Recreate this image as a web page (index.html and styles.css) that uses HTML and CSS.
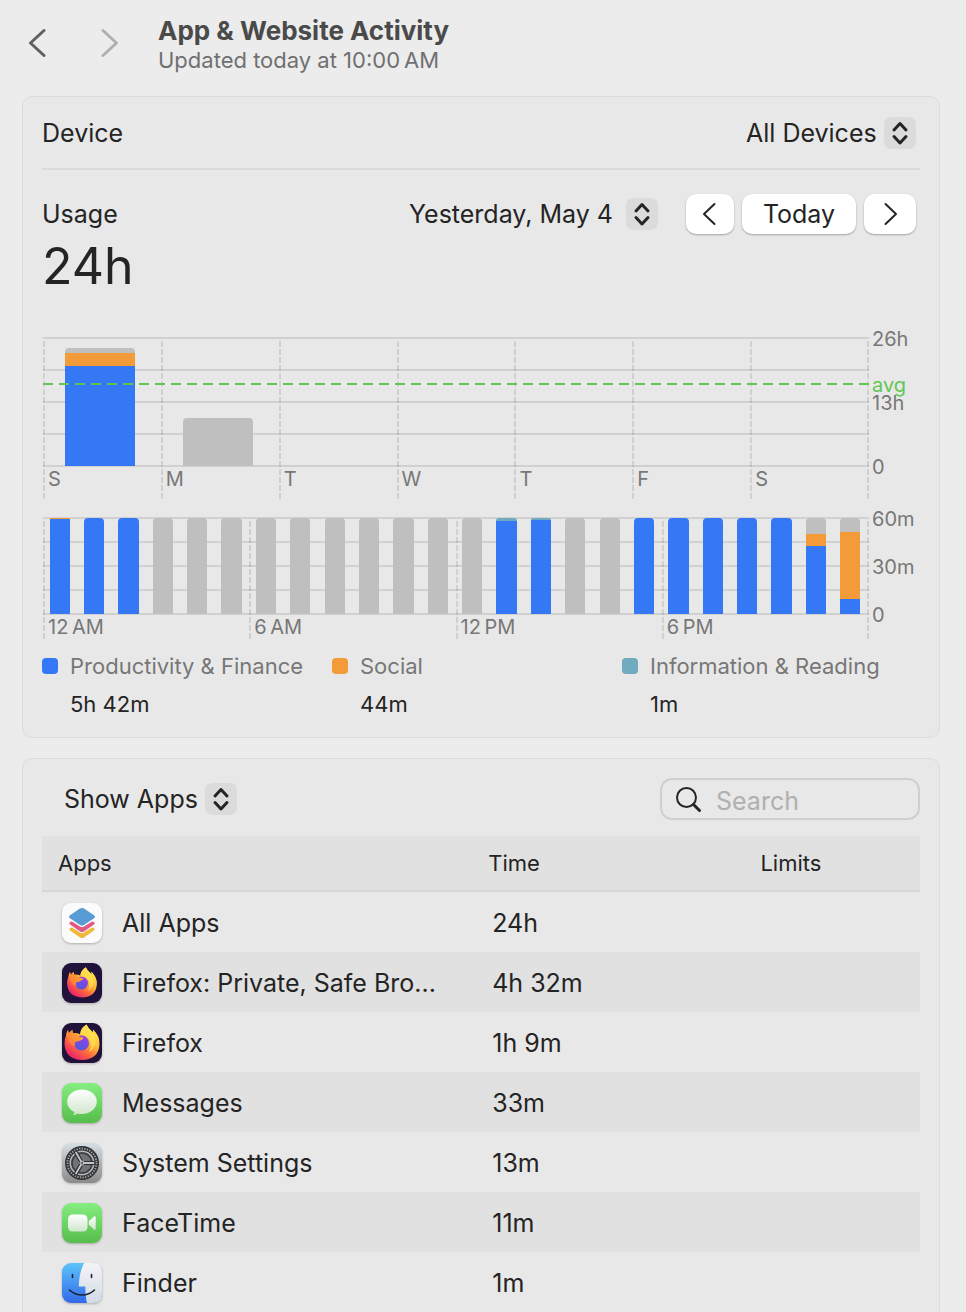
FILE: index.html
```
<!DOCTYPE html>
<html lang="en">
<head>
    <meta charset="UTF-8">
    <meta name="viewport" content="width=device-width, initial-scale=1.0">
    <title>App & Website Activity</title>
    <link rel="stylesheet" href="styles.css">
</head>
<body>
    <header class="header">
        <button type="button" class="nav-button" aria-label="Back">
            <svg width="18" height="30" viewBox="0 0 18 30"><path d="M16 2.5 2.5 15 16 27.5"/></svg>
        </button>
        <button type="button" class="nav-button forward" aria-label="Forward">
            <svg width="18" height="30" viewBox="0 0 18 30"><path d="M2 2.5 15.500 15 2 27.500"/></svg>
        </button>
        <div class="titles">
            <h1>App &amp; Website Activity</h1>
            <p>Updated today at 10:00&#8239;AM</p>
        </div>
    </header>

    <main>
        <!-- Usage panel -->
        <section class="panel">
            <div class="row device-row">
                <label for="device">Device</label>
                <span class="picker">
                    <select id="device"><option>All Devices</option></select>
                    <svg class="picker-icon" viewBox="0 0 32 32"><path d="M10 13 16 6.500 22 13M10 19.500 16 26 22 19.500"/></svg>
                </span>
            </div>

            <div class="row usage-row">
                <label for="day">Usage</label>
                <span class="picker day-picker">
                    <select id="day"><option>Yesterday, May 4</option></select>
                    <svg class="picker-icon" viewBox="0 0 32 32"><path d="M10 13 16 6.500 22 13M10 19.500 16 26 22 19.500"/></svg>
                </span>
                <button type="button" class="button prev" aria-label="Previous day">
                    <svg width="16" height="26" viewBox="0 0 16 26"><path d="M12.500 3 2 13 12.500 23"/></svg>
                </button>
                <button type="button" class="button today">Today</button>
                <button type="button" class="button next" aria-label="Next day">
                    <svg width="16" height="26" viewBox="0 0 16 26"><path d="M3.500 3 14 13 3.500 23"/></svg>
                </button>
            </div>
            <p class="total">24h</p>

            <div class="chart week">
                <div class="plot" id="week-plot">
                    <div class="average"></div>
                </div>
                <div class="scale">
                    <span>26h</span>
                    <span>13h</span>
                    <span>0</span>
                    <span class="average-label">avg</span>
                </div>
            </div>

            <div class="chart day">
                <div class="plot" id="day-plot"></div>
                <div class="scale">
                    <span>60m</span>
                    <span>30m</span>
                    <span>0</span>
                </div>
            </div>

            <dl class="legend">
                <div class="productivity">
                    <dt>Productivity &amp; Finance</dt>
                    <dd>5h 42m</dd>
                </div>
                <div class="social">
                    <dt>Social</dt>
                    <dd>44m</dd>
                </div>
                <div class="reading">
                    <dt>Information &amp; Reading</dt>
                    <dd>1m</dd>
                </div>
            </dl>
        </section>

        <!-- Apps panel -->
        <section class="panel apps-panel">
            <div class="row apps-toolbar">
                <span class="picker">
                    <select aria-label="Show"><option>Show Apps</option></select>
                    <svg class="picker-icon" viewBox="0 0 32 32"><path d="M10 13 16 6.500 22 13M10 19.500 16 26 22 19.500"/></svg>
                </span>
                <div class="search">
                    <svg width="28" height="28" viewBox="0 0 28 28"><circle cx="12.500" cy="12.500" r="9.500"/><path d="m19.500 19.500 6 6" stroke-width="3"/></svg>
                    <input type="search" placeholder="Search" aria-label="Search">
                </div>
            </div>

            <table class="apps">
                <thead>
                    <tr>
                        <th class="col-app">Apps</th>
                        <th class="col-time">Time</th>
                        <th>Limits</th>
                    </tr>
                </thead>
                <tbody>
                    <tr>
                        <td><div class="app">
                            <svg class="app-icon" viewBox="0 0 40 40">
                                <rect width="40" height="40" rx="9" fill="#fbfbfb"/>
                                <path d="m8 25 2-.5 8 5q2 1 4 0l8-5 2 .5q1.500 1 0 2.500L22 34.500q-2 1.200-4 0L8 27.500Q6.500 26 8 25z" fill="#f0b93d"/>
                                <path d="m8 19 2-.5 8 5q2 1 4 0l8-5 2 .5q1.500 1 0 2.500L22 28.500q-2 1.200-4 0L8 21.500Q6.500 20 8 19z" fill="#e05a86"/>
                                <path d="M18 5.500q2-1.200 4 0l10 6.700q2 1.500 0 3L22 22q-2 1.200-4 0L8 15.200q-2-1.500 0-3z" fill="#589bd5"/>
                            </svg>
                            All Apps
                        </div></td>
                        <td>24h</td>
                        <td></td>
                    </tr>
                    <tr>
                        <td><div class="app">
                            <svg class="app-icon" viewBox="0 0 40 40">
                                <defs>
                                    <linearGradient id="flame" x1=".85" y1=".1" x2=".25" y2=".9">
                                        <stop offset="0" stop-color="#ffe94f"/>
                                        <stop offset=".4" stop-color="#ffb83a"/>
                                        <stop offset=".68" stop-color="#ff6b3d"/>
                                        <stop offset="1" stop-color="#ec2c66"/>
                                    </linearGradient>
                                    <linearGradient id="globe" x1=".8" y1="0" x2=".2" y2="1">
                                        <stop offset="0" stop-color="#9a3fe8"/>
                                        <stop offset="1" stop-color="#4a59dc"/>
                                    </linearGradient>
                                    <linearGradient id="fox" x1="0" y1="1" x2="1" y2="0">
                                        <stop offset="0" stop-color="#ff6b3a"/>
                                        <stop offset="1" stop-color="#ffb630"/>
                                    </linearGradient>
                                    <symbol id="firefox" viewBox="0 0 40 40">
                                        <path d="M24.500 1.500q1.500 3.500 5 6.500.8.700 1.300 1.700L31 6.500q7 6.500 6.500 15-1 15-17.500 15.500Q3.500 36.500 2.500 21q0-5.500 1.700-9Q4.500 9 6 7q.2 2 1 3.200Q8.500 8 10.500 7q-.3 2 .5 3.300 3-.8 7 1 .5-6 6.500-9.800z" fill="url(#flame)"/>
                                        <path d="M24.500 1.500q1.500 3.500 5 6.500 5 5 4 12.500-1.500 6.500-7 8.500 3-4 2-9.500-1-4.500-5.500-6.500l-5-1.700q.5-6 6.500-9.800z" fill="#ffe052" opacity=".75"/>
                                        <circle cx="19.500" cy="20" r="7.500" fill="url(#globe)"/>
                                        <path d="M4.200 12Q4.500 9 6 7q.2 2 1 3.200Q8.500 8 10.500 7q-.3 2 .5 3.300 2.500 0 4.500 2.200 2.500 1.800 6 2-.5 2.700-4 3.300-1.500 1.200-4 1-1.500 2.500-.5 5-6-2-8.800-11.800z" fill="url(#fox)"/>
                                    </symbol>
                                </defs>
                                <rect width="40" height="40" rx="9" fill="#20123a"/>
                                <use href="#firefox" x="2" y="3" width="36" height="34"/>
                            </svg>
                            Firefox: Private, Safe Bro...
                        </div></td>
                        <td>4h 32m</td>
                        <td></td>
                    </tr>
                    <tr>
                        <td><div class="app">
                            <svg class="app-icon" viewBox="0 0 40 40">
                                <rect width="40" height="40" rx="9" fill="#20123a"/>
                                <use href="#firefox" width="40" height="40"/>
                            </svg>
                            Firefox
                        </div></td>
                        <td>1h 9m</td>
                        <td></td>
                    </tr>
                    <tr>
                        <td><div class="app">
                            <svg class="app-icon" viewBox="0 0 40 40">
                                <defs>
                                    <linearGradient id="green" x1="0" y1="0" x2="0" y2="1">
                                        <stop offset="0" stop-color="#85ee80"/>
                                        <stop offset="1" stop-color="#56bd4b"/>
                                    </linearGradient>
                                    <linearGradient id="bubble" x1="0" y1="0" x2="0" y2="1">
                                        <stop offset="0" stop-color="#fff"/>
                                        <stop offset="1" stop-color="#cfe6cb"/>
                                    </linearGradient>
                                </defs>
                                <rect width="40" height="40" rx="9" fill="url(#green)"/>
                                <path d="M20 6.500c8.300 0 14.800 5.200 14.800 12S28.300 31 20 31q-2.500 0-4.500-.6-2 1.600-4.500 1.800 1.500-1.200 1.600-3.200C8 27 5.200 23 5.200 18.500c0-6.800 6.500-12 14.800-12z" fill="url(#bubble)"/>
                            </svg>
                            Messages
                        </div></td>
                        <td>33m</td>
                        <td></td>
                    </tr>
                    <tr>
                        <td><div class="app">
                            <svg class="app-icon" viewBox="0 0 40 40">
                                <defs>
                                    <linearGradient id="metal" x1="0" y1="0" x2="0" y2="1">
                                        <stop offset="0" stop-color="#d5dfe4"/>
                                        <stop offset="1" stop-color="#8d8989"/>
                                    </linearGradient>
                                </defs>
                                <rect width="40" height="40" rx="9" fill="url(#metal)"/>
                                <circle cx="20" cy="20" r="17" fill="#303233"/>
                                <circle cx="20" cy="20" r="14.500" fill="none" stroke="#a0a5a7" stroke-width="2" stroke-dasharray="1.300 1.300" stroke-linecap="butt"/>
                                <circle cx="20" cy="20" r="11.800" fill="#707375" stroke="#b4b8ba" stroke-width="1.500"/>
                                <circle cx="20" cy="20" r="10" fill="none" stroke="#3a3c3d" stroke-width="1.500"/>
                                <path d="M20 20h11.500M20 20l-6-10.500M20 20l-6 10.500" stroke="#2b2d2e" stroke-width="4"/>
                                <path d="M20 20h11.500M20 20l-6-10.500M20 20l-6 10.500" stroke="#c4c8ca" stroke-width="1.800"/>
                                <circle cx="20" cy="20" r="2" fill="#65696b" stroke="#c4c8ca"/>
                            </svg>
                            System Settings
                        </div></td>
                        <td>13m</td>
                        <td></td>
                    </tr>
                    <tr>
                        <td><div class="app">
                            <svg class="app-icon" viewBox="0 0 40 40">
                                <rect width="40" height="40" rx="9" fill="url(#green)"/>
                                <rect x="6" y="11.500" width="19.500" height="17" rx="4.500" fill="url(#bubble)"/>
                                <path d="M26.800 18.300 32 13.500q1.700-1 1.700.8v11.400q0 1.800-1.700.8l-5.200-4.800z" fill="url(#bubble)"/>
                            </svg>
                            FaceTime
                        </div></td>
                        <td>11m</td>
                        <td></td>
                    </tr>
                    <tr>
                        <td><div class="app">
                            <svg class="app-icon" viewBox="0 0 40 40">
                                <defs>
                                    <linearGradient id="sky" x1="0" y1="0" x2="0" y2="1">
                                        <stop offset="0" stop-color="#5cc3fa"/>
                                        <stop offset="1" stop-color="#3269ea"/>
                                    </linearGradient>
                                    <linearGradient id="face" x1="0" y1="0" x2="0" y2="1">
                                        <stop offset="0" stop-color="#f4f4f7"/>
                                        <stop offset="1" stop-color="#d3dae6"/>
                                    </linearGradient>
                                </defs>
                                <rect width="40" height="40" rx="9" fill="url(#sky)"/>
                                <path d="M22 0h9q9 0 9 9v22q0 9-9 9h-6q-1.500-5-1.700-16.500h-6.500Q17 10 22 0z" fill="url(#face)"/>
                                <path d="M10.500 11.500v3M29.500 11.500v3M7.500 27q5.500 5 12.500 5t12.500-5" fill="none" stroke="#1b2230" stroke-width="1.600" stroke-linecap="round"/>
                            </svg>
                            Finder
                        </div></td>
                        <td>1m</td>
                        <td></td>
                    </tr>
                </tbody>
            </table>
        </section>
    </main>

    <script>
        // Percent of the full scale, listed from the bottom of the bar up
        const week = [
            { label: 'S', parts: { productivity: 78, social: 10, other: 4 } },
            { label: 'M', parts: { other: 37.5 } },
            { label: 'T' },
            { label: 'W' },
            { label: 'T' },
            { label: 'F' },
            { label: 'S' }
        ];

        const full = { productivity: 100 };
        const other = { other: 100 };
        const hours = [
            { productivity: 99, social: 1 }, full, full, other, other, other,
            other, other, other, other, other, other,
            other, { productivity: 97, reading: 3 }, { productivity: 98, reading: 2 }, other, other, full,
            full, full, full, full,
            { productivity: 71, social: 12, other: 17 },
            { productivity: 16, social: 69, other: 15 }
        ];
        const hourLabels = { 0: '12\u202fAM', 6: '6\u202fAM', 12: '12\u202fPM', 18: '6\u202fPM' };
        const day = hours.map((parts, hour) => ({ label: hourLabels[hour], parts }));

        function drawBars(plotId, slots) {
            const plot = document.getElementById(plotId);
            slots.forEach(slot => {
                const slotDiv = document.createElement('div');
                slotDiv.classList.add('slot');
                const bar = document.createElement('div');
                bar.classList.add('bar');
                for (const [category, percent] of Object.entries(slot.parts || {})) {
                    const part = document.createElement('div');
                    part.classList.add('part', category);
                    part.style.height = `${percent}%`;
                    bar.appendChild(part);
                }
                slotDiv.appendChild(bar);
                if (slot.label) {
                    slotDiv.classList.add('marked');
                    const label = document.createElement('span');
                    label.textContent = slot.label;
                    slotDiv.appendChild(label);
                }
                plot.appendChild(slotDiv);
            });
        }

        drawBars('week-plot', week);
        drawBars('day-plot', day);
    </script>
</body>
</html>
```
FILE: styles.css
```
* {
    box-sizing: border-box;
}

:root {
    --text: #242424;
    --muted: #777;
    --line: rgba(0, 0, 0, 0.1);
    --blue: #3478f6;
    --orange: #f29b38;
    --teal: #70aabf;
    --green: #62c655;
}

body {
    margin: 0;
    padding: 0 26px 0 22px;
    background-color: #ececec;
    color: var(--text);
    font-family: Inter, "Liberation Sans", sans-serif;
    font-size: 25px;
    line-height: 30px;
}

h1, p, dl, dd {
    margin: 0;
}

button, select, input {
    font: inherit;
    color: inherit;
}

svg {
    display: block;
    flex: none;
    fill: none;
    stroke-linecap: round;
    stroke-linejoin: round;
}

.header {
    display: flex;
    align-items: center;
    height: 96px;
    padding: 0 6px 10px;
}

.nav-button {
    padding: 0;
    border: none;
    background: none;
    margin-right: 55px;
}

.nav-button svg {
    stroke: #606060;
    stroke-width: 3;
}

.nav-button.forward {
    margin-right: 39px;
}

.nav-button.forward svg {
    stroke: #b0b0b0;
}

.titles {
    padding-top: 3px;
}

.titles h1 {
    font-size: 26px;
    line-height: 30px;
    font-weight: 700;
    color: #4a4a4a;
}

.titles p {
    font-size: 22px;
    line-height: 28px;
    color: #707070;
}

.panel {
    border: 1px solid #dcdcdc;
    border-radius: 10px;
    background-color: #e8e8e8;
    padding: 0 19px;
}

.row {
    display: flex;
    align-items: center;
}

.device-row {
    justify-content: space-between;
    height: 73px;
    padding-right: 4px;
    border-bottom: 2px solid #dadada;
}

.picker {
    position: relative;
    display: inline-flex;
}

.picker select {
    appearance: none;
    border: none;
    background: none;
    padding: 0 39px 0 0;
    height: 32px;
}

.picker-icon {
    position: absolute;
    right: 0;
    top: 0;
    width: 32px;
    height: 32px;
    border-radius: 7px;
    background-color: #dbdbdb;
    stroke: var(--text);
    stroke-width: 3;
    pointer-events: none;
}

.usage-row {
    gap: 8px;
    padding: 24px 4px 0 0;
}

.day-picker {
    margin-left: auto;
    margin-right: 20px;
}

.day-picker select {
    padding-right: 45px;
}

.button {
    display: flex;
    align-items: center;
    justify-content: center;
    height: 40px;
    padding: 0;
    border: none;
    border-radius: 10px;
    background-color: #fff;
    box-shadow: 0 1px 2px rgba(0, 0, 0, 0.3);
}

.button svg {
    stroke: var(--text);
    stroke-width: 2;
}

.button.prev {
    width: 48px;
}

.button.today {
    width: 114px;
}

.button.next {
    width: 52px;
}

.total {
    font-size: 50px;
    line-height: 60px;
    padding-top: 2px;
}

.chart {
    display: flex;
    gap: 3px;
    padding-left: 1px;
    font-size: 20px;
    line-height: 24px;
    color: var(--muted);
}

.plot {
    position: relative;
    flex: 1;
    display: flex;
    padding-top: 1px;
    padding-right: 1px;
}

/* horizontal grid lines */
.plot::before {
    content: "";
    position: absolute;
    inset: 0 0 auto;
    height: calc(var(--scale) + 2px);
    background: repeating-linear-gradient(var(--line) 0 2px, transparent 2px calc(var(--scale) / 4));
}

/* closing line on the right */
.plot::after {
    content: "";
    position: absolute;
    right: 0;
    top: 4px;
    bottom: 0;
    width: 2px;
    background: repeating-linear-gradient(var(--line) 0 6px, transparent 6px 8px);
}

.week {
    --scale: 128px;
    margin-top: 41px;
    height: 162px;
}

.day {
    --scale: 96px;
    margin-top: 18px;
    height: 122px;
}

.slot {
    position: relative;
    flex: 1 1 0;
    min-width: 0;
    white-space: nowrap;
}

.slot.marked::before {
    content: "";
    position: absolute;
    left: 0;
    top: 3px;
    bottom: 0;
    width: 2px;
    background: repeating-linear-gradient(var(--line) 0 6px, transparent 6px 8px);
}

.slot span {
    display: block;
    padding: 1px 0 0 5px;
}

.bar {
    display: flex;
    flex-direction: column-reverse;
    width: 59%;
    height: var(--scale);
    margin-left: 19%;
}

.part:last-child {
    border-radius: 4px 4px 0 0;
}

.part.productivity {
    background-color: var(--blue);
}

.part.social {
    background-color: var(--orange);
}

.part.reading {
    background-color: var(--teal);
}

.part.other {
    background-color: #bfbfbf;
}

.average {
    position: absolute;
    inset: 46px 0 auto;
    height: 2px;
    background: repeating-linear-gradient(to right, var(--green) 0 10px, transparent 10px 16px);
    z-index: 1;
}

.scale {
    position: relative;
    display: flex;
    flex-direction: column;
    justify-content: space-between;
    width: 48px;
    height: calc(var(--scale) + 24px);
    margin-top: -10px;
}

.average-label {
    position: absolute;
    top: 46px;
    left: 0;
    color: var(--green);
}

.legend {
    display: grid;
    grid-template-columns: 290px 290px auto;
    padding: 13px 0 19px;
    font-size: 22px;
    line-height: 28px;
}

.legend div {
    padding-left: 28px;
}

.legend dt {
    position: relative;
    color: var(--muted);
    white-space: nowrap;
}

.legend dt::before {
    content: "";
    position: absolute;
    left: -28px;
    top: 6px;
    width: 16px;
    height: 16px;
    border-radius: 4px;
    background-color: var(--blue);
}

.legend .social dt::before {
    background-color: var(--orange);
}

.legend .reading dt::before {
    background-color: var(--teal);
}

.legend dd {
    padding-top: 10px;
}

.apps-panel {
    margin-top: 20px;
    border-bottom: none;
    border-radius: 10px 10px 0 0;
}

.apps-toolbar {
    justify-content: space-between;
    height: 77px;
    padding: 3px 0 0 22px;
}

.search {
    display: flex;
    align-items: center;
    width: 260px;
    height: 42px;
    gap: 14px;
    padding: 0 12px;
    border: 2px solid #cfcfcf;
    border-radius: 12px;
}

.search svg {
    stroke: var(--text);
    stroke-width: 2;
}

.search input {
    width: 100%;
    min-width: 0;
    padding: 3px 0 0;
    border: none;
    outline: none;
    background: none;
    appearance: none;
}

.search input::placeholder {
    color: #b0b0b0;
}

.apps {
    width: 100%;
    border-collapse: separate;
    border-spacing: 0;
    table-layout: fixed;
}

.apps th {
    height: 56px;
    padding: 0 16px;
    border-bottom: 2px solid #d6d6d6;
    background-color: #e1e1e1;
    font-size: 22px;
    font-weight: 400;
    text-align: left;
}

.col-app {
    width: 49%;
}

.col-time {
    width: 31%;
}

.apps td {
    height: 60px;
    padding: 2px 20px 0;
}

.apps tbody tr:nth-child(even) {
    background-color: #e1e1e1;
}

.app {
    display: flex;
    align-items: center;
    gap: 20px;
    white-space: nowrap;
}

.app-icon {
    width: 40px;
    height: 40px;
    filter: drop-shadow(0 1px 1px rgba(0, 0, 0, 0.25));
}
```
